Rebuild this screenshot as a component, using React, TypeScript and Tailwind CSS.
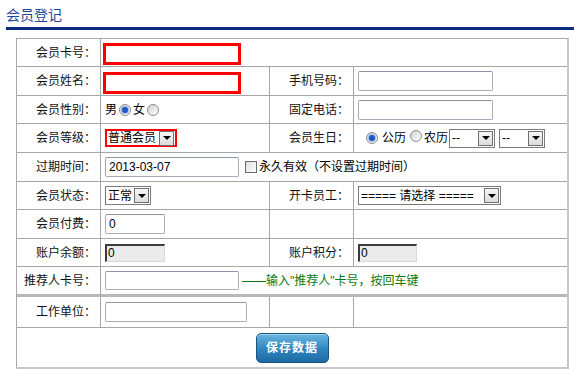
import React from "react";

const font = "font-['Liberation_Sans','Noto_Sans_CJK_SC',sans-serif]";

function Label({ children, last = false, thick = false }: { children?: React.ReactNode; last?: boolean; thick?: boolean }) {
  return (
    <div
      className={`flex items-center justify-end pr-[4px] text-[12px] text-[#111] border-[#a6a6a6] ${last ? "" : "border-r"} ${
        thick ? "border-b-[3px] border-b-[#b8b8b8]" : "border-b"
      }`}
    >
      {children}
    </div>
  );
}

function Cell({ children, last = false, span = "", thick = false, pl = "pl-[4px]" }: { children?: React.ReactNode; last?: boolean; span?: string; thick?: boolean; pl?: string }) {
  return (
    <div
      className={`flex items-center ${pl} text-[12px] border-[#a6a6a6] ${span} ${last ? "" : "border-r"} ${
        thick ? "border-b-[3px] border-b-[#b8b8b8]" : "border-b"
      }`}
    >
      {children}
    </div>
  );
}

function Input({ w, value = "", h = "h-[20px]" }: { w: string; value?: string; h?: string }) {
  return (
    <div className={`${w} ${h} border border-[#a5adba] border-t-[#8d96a6] rounded-[2px] bg-white flex items-center pl-[3px] text-[12px] text-black leading-none`}>
      {value}
    </div>
  );
}

function DisabledInput({ w, value }: { w: string; value: string }) {
  return (
    <div className={`${w} h-[18px] border-t-2 border-l-2 border-t-[#3c3c3c] border-l-[#3c3c3c] border-b border-r border-b-[#d8d8d8] border-r-[#d8d8d8] bg-[#ebebeb] flex items-center pl-[1px] text-[12px] text-black leading-none`}>
      {value}
    </div>
  );
}

function Arrow() {
  return (
    <span className="w-[15px] h-[15px] border border-[#6f6f6f] bg-gradient-to-b from-[#f7f7f7] to-[#dcdcdc] flex items-center justify-center shrink-0">
      <span className="w-0 h-0 border-l-[4px] border-r-[4px] border-t-[4px] border-l-transparent border-r-transparent border-t-black" />
    </span>
  );
}

function Select({ w, text, red = false }: { w: string; text: string; red?: boolean }) {
  return (
    <div
      className={`${w} flex items-center justify-between bg-white ${
        red ? "h-[18px] border-2 border-[#ff0000] pl-[1px]" : "h-[19px] border border-[#7b7b7b] pl-[2px]"
      } pr-[1px] text-[12px] text-black leading-none`}
    >
      <span className="whitespace-pre">{text}</span>
      <Arrow />
    </div>
  );
}

function Radio({ checked = false }: { checked?: boolean }) {
  return (
    <span className="inline-flex w-[12px] h-[12px] rounded-full border border-[#8c8c8c] bg-gradient-to-br from-[#d0d0d0] to-white items-center justify-center mx-[2px]">
      {checked && <span className="w-[6px] h-[6px] rounded-full bg-[#1d56c9] ring-1 ring-[#9fc0f0]" />}
    </span>
  );
}

export default function App() {
  return (
    <div className={`w-[574px] h-[381px] bg-white ${font} text-black`}>
      <div className="h-[27px] pl-[6px] pt-[5px] text-[14px] leading-[20px] text-[#1d4597]">会员登记</div>
      <div className="ml-[6px] h-[3px] bg-[#0d2b80]" />
      <div className="ml-[16px] mt-[8px] w-[553px] border-l border-t border-[#a9a9a9] border-r-2 border-b-2 border-r-[#c8c8c8] border-b-[#c8c8c8] grid grid-cols-[84px_169px_84px_213px] grid-rows-[28px_29px_28px_29px_29px_28px_29px_28px_30px_31px_39px]">
        {/* row 1 */}
        <Label>会员卡号：</Label>
        <Cell span="col-span-3" last pl="pl-[2px]">
          <div className="w-[138px] h-[22px] border-[3px] border-[#ff0000] bg-white mt-[3px]" />
        </Cell>
        {/* row 2 */}
        <Label>会员姓名：</Label>
        <Cell pl="pl-[2px]">
          <div className="w-[138px] h-[22px] border-[3px] border-[#ff0000] bg-white mt-[3px]" />
        </Cell>
        <Label>手机号码：</Label>
        <Cell last>
          <Input w="w-[135px]" />
        </Cell>
        {/* row 3 */}
        <Label>会员性别：</Label>
        <Cell>
          <span>男</span>
          <Radio checked />
          <span>女</span>
          <Radio />
        </Cell>
        <Label>固定电话：</Label>
        <Cell last>
          <Input w="w-[135px]" />
        </Cell>
        {/* row 4 */}
        <Label>会员等级：</Label>
        <Cell>
          <Select w="w-[72px]" text="普通会员" red />
        </Cell>
        <Label>会员生日：</Label>
        <Cell last pl="pl-[10px]">
          <Radio checked />
          <span className="ml-[2px]">公历</span>
          <span className="ml-[2px]"><Radio /></span>
          <span>农历</span>
          <div className="ml-[1px]">
            <Select w="w-[46px]" text="--" />
          </div>
          <div className="ml-[4px]">
            <Select w="w-[46px]" text="--" />
          </div>
        </Cell>
        {/* row 5 */}
        <Label>过期时间：</Label>
        <Cell span="col-span-3" last>
          <Input w="w-[134px]" value="2013-03-07" />
          <span className="ml-[6px] w-[12px] h-[12px] border border-[#6d6d6d] bg-gradient-to-br from-[#dedede] to-white" />
          <span className="ml-[2px]">永久有效（不设置过期时间）</span>
        </Cell>
        {/* row 6 */}
        <Label>会员状态：</Label>
        <Cell>
          <Select w="w-[46px]" text="正常" />
        </Cell>
        <Label>开卡员工：</Label>
        <Cell last>
          <Select w="w-[143px]" text="===== 请选择 =====" />
        </Cell>
        {/* row 7 */}
        <Label>会员付费：</Label>
        <Cell>
          <Input w="w-[60px]" value="0" />
        </Cell>
        <Cell />
        <Cell last />
        {/* row 8 */}
        <Label>账户余额：</Label>
        <Cell>
          <DisabledInput w="w-[60px]" value="0" />
        </Cell>
        <Label>账户积分：</Label>
        <Cell last>
          <DisabledInput w="w-[59px]" value="0" />
        </Cell>
        {/* row 9 */}
        <Label thick>推荐人卡号：</Label>
        <Cell span="col-span-3" last thick>
          <Input w="w-[134px]" h="h-[19px]" />
          <span className="ml-[3px] text-[#0a7a0a]">——输入"推荐人"卡号，按回车键</span>
        </Cell>
        {/* row 10 */}
        <Label>工作单位：</Label>
        <Cell>
          <Input w="w-[142px]" />
        </Cell>
        <Cell />
        <Cell last />
        {/* row 11 */}
        <div className="col-span-4 flex items-center justify-center">
          <button className="w-[73px] h-[30px] rounded-[5px] border border-[#1b557f] bg-gradient-to-b from-[#6ab6e2] via-[#3388c2] to-[#1d6aa3] text-white text-[12px] font-bold tracking-[1px] shadow-[inset_0_1px_0_rgba(255,255,255,0.4)]">
            保存数据
          </button>
        </div>
      </div>
    </div>
  );
}
